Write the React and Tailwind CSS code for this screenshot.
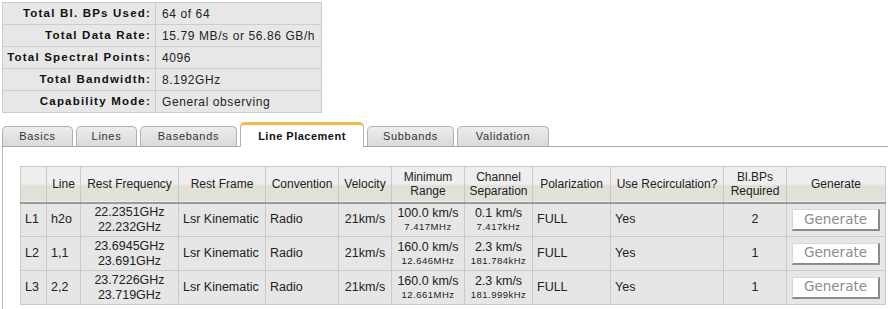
import React from 'react';

const summary = [
    ['Total Bl. BPs Used:', '64 of 64'],
    ['Total Data Rate:', '15.79 MB/s or 56.86 GB/h'],
    ['Total Spectral Points:', '4096'],
    ['Total Bandwidth:', '8.192GHz'],
    ['Capability Mode:', 'General observing'],
];

const tabs = [
    { label: 'Basics', w: 'w-[71px]' },
    { label: 'Lines', w: 'w-[61px]' },
    { label: 'Basebands', w: 'w-[97px]' },
    { label: 'Line Placement', w: 'w-[124px]', active: true },
    { label: 'Subbands', w: 'w-[87px]' },
    { label: 'Validation', w: 'w-[92px]' },
];

const rows = [
    { id: 'L1', line: 'h2o', f1: '22.2351GHz', f2: '22.232GHz', range: '100.0 km/s', rangeHz: '7.417MHz', sep: '0.1 km/s', sepHz: '7.417kHz', bps: 2 },
    { id: 'L2', line: '1,1', f1: '23.6945GHz', f2: '23.691GHz', range: '160.0 km/s', rangeHz: '12.646MHz', sep: '2.3 km/s', sepHz: '181.784kHz', bps: 1 },
    { id: 'L3', line: '2,2', f1: '23.7226GHz', f2: '23.719GHz', range: '160.0 km/s', rangeHz: '12.661MHz', sep: '2.3 km/s', sepHz: '181.999kHz', bps: 1 },
];

const th = 'border border-[#c9c9c9] font-normal px-1 leading-[14px]';
const td = 'border border-[#c9c9c9] px-1 leading-[15px]';

export default function App() {
    return (
        <div className="w-[888px] h-[309px] overflow-hidden bg-white font-['Liberation_Sans',Arial,sans-serif] text-[#222]">
            {/* Summary */}
            <table className="ml-[2px] mt-[2px] w-[320px] border-collapse bg-[#e7e7e7] border border-[#c4c4c4]">
                <tbody>
                    {summary.map(([k, v]) => (
                        <tr key={k} className="h-[22px]">
                            <td className="w-[153px] border border-[#cdcdcd] pr-[4px] text-right text-[11.5px] font-bold tracking-[1.2px] text-[#111]">{k}</td>
                            <td className="border border-[#cdcdcd] pl-[6px] text-[12px] tracking-[0.6px] text-[#222]">{v}</td>
                        </tr>
                    ))}
                </tbody>
            </table>

            {/* Tabs */}
            <div className="mt-[10px] ml-[2px] flex items-end gap-[3px] border-b border-[#a8a8a8] h-[24px]">
                {tabs.map(t => t.active ? (
                    <div key={t.label} className={`${t.w} h-[25px] -mb-px flex items-center justify-center rounded-t-[5px] border border-b-0 border-[#b5b5b5] border-t-[3px] border-t-[#f7b844] bg-white text-[11px] font-bold tracking-[0.5px] text-[#111]`}>
                        {t.label}
                    </div>
                ) : (
                    <div key={t.label} className={`${t.w} h-[20px] flex items-center justify-center rounded-t-[5px] border border-b-0 border-[#b0b0b0] bg-gradient-to-b from-[#ececec] to-[#dadada] text-[11px] tracking-[0.7px] text-[#333]`}>
                        {t.label}
                    </div>
                ))}
            </div>

            {/* Content */}
            <div className="ml-[2px] border-l border-[#b8b8b8] h-[170px] pt-[19px] pl-[17px]">
                <table className="w-[866px] border-collapse text-[12px] text-center">
                    <thead>
                        <tr className="h-[36px] bg-[linear-gradient(#eeeeee_0%,#eeeeee_50%,#e1e1da_55%,#e1e1da_100%)] border-b-2 border-b-[#9a9a9a]">
                            <th className={`${th} w-[26px]`}></th>
                            <th className={`${th} w-[34px]`}>Line</th>
                            <th className={`${th} w-[98px]`}>Rest Frequency</th>
                            <th className={`${th} w-[87px]`}>Rest Frame</th>
                            <th className={`${th} w-[73px]`}>Convention</th>
                            <th className={`${th} w-[53px]`}>Velocity</th>
                            <th className={`${th} w-[73px]`}>Minimum<br />Range</th>
                            <th className={`${th} w-[68px]`}>Channel<br />Separation</th>
                            <th className={`${th} w-[78px]`}>Polarization</th>
                            <th className={`${th} w-[113px]`}>Use Recirculation?</th>
                            <th className={`${th} w-[63px]`}>Bl.BPs<br />Required</th>
                            <th className={th}>Generate</th>
                        </tr>
                    </thead>
                    <tbody className="bg-[#e6e6e6] text-[12.5px]">
                        {rows.map(r => (
                            <tr key={r.id} className="h-[34px]">
                                <td className={`${td} text-left`}>{r.id}</td>
                                <td className={`${td} text-left`}>{r.line}</td>
                                <td className={td}>{r.f1}<br />{r.f2}</td>
                                <td className={`${td} text-left`}>Lsr Kinematic</td>
                                <td className={`${td} text-left`}>Radio</td>
                                <td className={td}>21km/s</td>
                                <td className={td}>
                                    <div>{r.range}</div>
                                    <div className="text-[9.5px] tracking-[0.5px] leading-[12px]">{r.rangeHz}</div>
                                </td>
                                <td className={td}>
                                    <div>{r.sep}</div>
                                    <div className="text-[9.5px] tracking-[0.5px] leading-[12px]">{r.sepHz}</div>
                                </td>
                                <td className={`${td} text-left`}>FULL</td>
                                <td className={`${td} text-left`}>Yes</td>
                                <td className={td}>{r.bps}</td>
                                <td className={td}>
                                    <button className="w-[88px] h-[22px] bg-white border border-t-[#d8d8d8] border-l-[#d8d8d8] border-r-2 border-b-2 border-r-[#8a8a8a] border-b-[#8a8a8a] font-['DejaVu_Sans',sans-serif] text-[13.5px] text-[#8c8c8c] leading-none">
                                        Generate
                                    </button>
                                </td>
                            </tr>
                        ))}
                    </tbody>
                </table>
            </div>
        </div>
    );
}
